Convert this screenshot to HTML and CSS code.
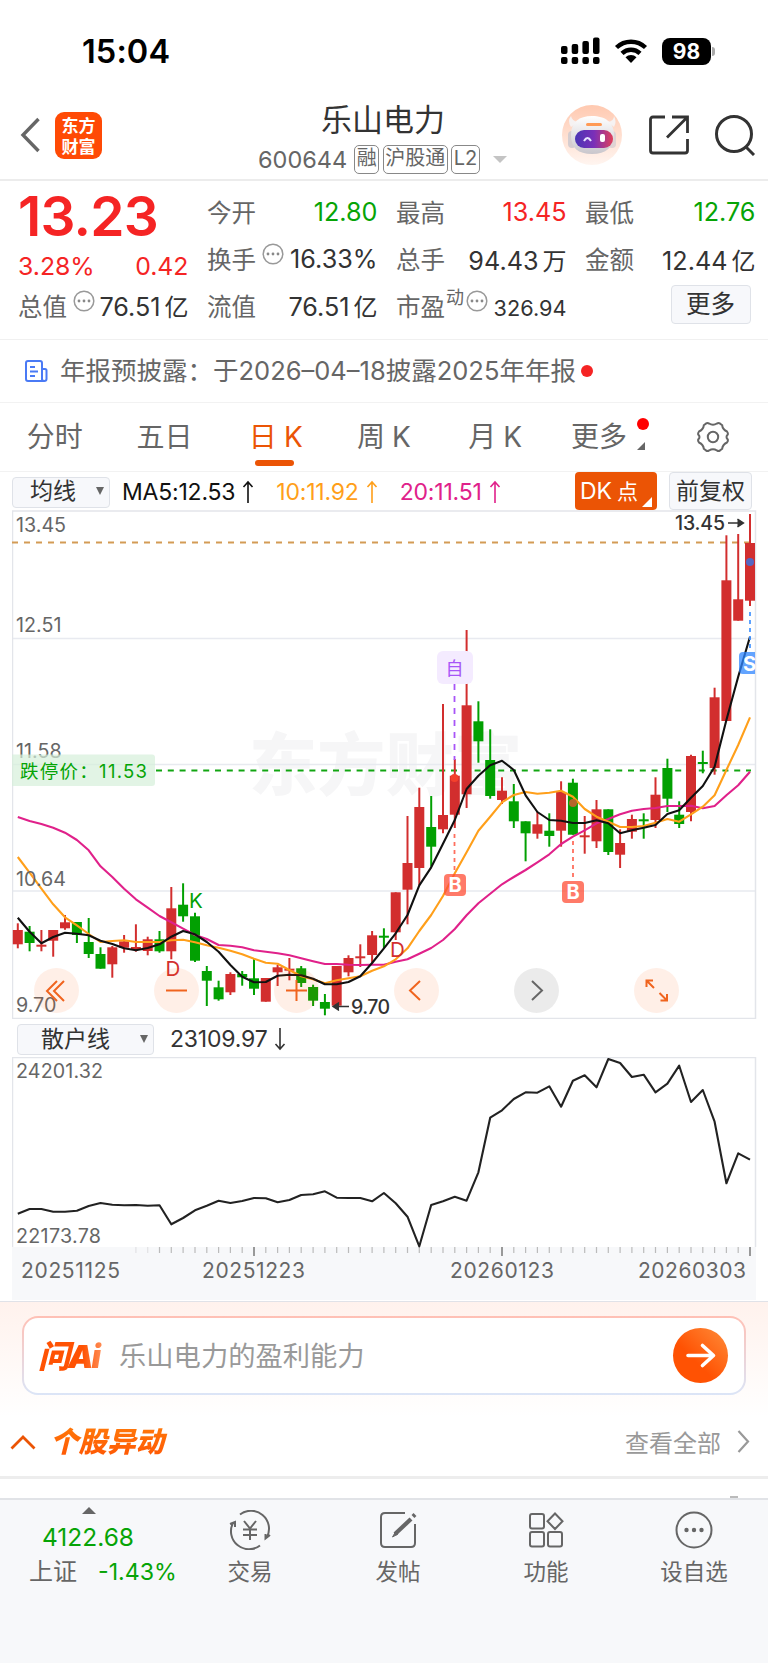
FILE: index.html
```html
<!DOCTYPE html>
<html lang="zh-CN">
<head>
    <meta charset="UTF-8">
    <meta name="viewport" content="width=device-width, initial-scale=1.0">
    <title>乐山电力 600644</title>
    <link rel="stylesheet" href="styles.css">
</head>
<body>
    <div class="status-bar">
        <span class="time">15:04</span>
        <div class="status-icons">
            <svg width="39" height="28" viewBox="0 0 39 28">
                <rect x="0" y="9" width="6.5" height="8" rx="2"/>
                <rect x="10.7" y="7" width="6.5" height="10" rx="2"/>
                <rect x="21.4" y="4" width="6.5" height="13" rx="2"/>
                <rect x="32" y="0.5" width="6.5" height="16.5" rx="2"/>
                <rect x="0" y="20" width="6.5" height="7" rx="2"/>
                <rect x="10.7" y="20" width="6.5" height="7" rx="2"/>
                <rect x="21.4" y="20" width="6.5" height="7" rx="2"/>
                <rect x="32" y="20" width="6.5" height="7" rx="2"/>
            </svg>
            <svg class="wifi" width="34" height="26" viewBox="0 0 34 26">
                <path d="M2.5 9.5a21 21 0 0 1 29 0M8 15.3a13 13 0 0 1 18 0" fill="none" stroke="#000" stroke-width="4.4"/>
                <path d="M11.5 19.2a8 8 0 0 1 11 0L17 25z"/>
            </svg>
            <span class="battery">98</span><i class="battery-cap"></i>
        </div>
    </div>

    <header class="header">
        <svg class="back" width="21" height="36" viewBox="0 0 21 36"><path d="M18.500 2L3 18l15.500 16" fill="none" stroke="#666" stroke-width="3.400"/></svg>
        <div class="logo"><span>东方</span><span>财富</span></div>
        <div class="title">
            <h1>乐山电力</h1>
            <div class="sub">
                <span class="code">600644</span>
                <span class="tag">融</span><span class="tag">沪股通</span><span class="tag">L2</span>
                <i class="caret"></i>
            </div>
        </div>
        <div class="actions">
            <svg width="60" height="60" viewBox="0 0 60 60">
                <defs>
                    <linearGradient id="halo" x1="0" y1="0" x2="0" y2="1"><stop offset="0" stop-color="#ffc9b0"/><stop offset="1" stop-color="#fff5f0"/></linearGradient>
                    <linearGradient id="visor"><stop offset="0" stop-color="#4a35b5"/><stop offset=".5" stop-color="#7a2fb8"/><stop offset="1" stop-color="#e0405a"/></linearGradient>
                    <linearGradient id="shell" x1="0" y1="0" x2="0" y2="1"><stop offset="0" stop-color="#fff"/><stop offset="1" stop-color="#c9c6cc"/></linearGradient>
                </defs>
                <circle cx="30" cy="30" r="30" fill="url(#halo)"/>
                <path d="M9 22q-4-6 0-11q1 5 7 6zM46 17q6-1 6-6q3 6 0 11z" fill="#f6f2f2"/>
                <rect x="6" y="26" width="8" height="17" rx="4" fill="#d5cdd0"/>
                <rect x="46" y="26" width="8" height="17" rx="4" fill="#e0d3d3"/>
                <path d="M9 30C9 17 17 11 30 11s22 6 22 19c0 12-8 19-22 19S9 43 9 30z" fill="url(#shell)"/>
                <rect x="24" y="18" width="16" height="3" rx="1.500" fill="#ff9a55"/>
                <rect x="13" y="25" width="38" height="18" rx="9" fill="url(#visor)"/>
                <path d="M22 36q3.500-6 7 0" fill="none" stroke="#e6e4ff" stroke-width="2"/>
                <rect x="38" y="29" width="5" height="8" rx="2" fill="#fff"/>
            </svg>
            <svg width="40" height="40" viewBox="0 0 40 40" fill="none" stroke="#333" stroke-width="2.800">
                <path d="M16 2H4Q1.500 2 1.500 4.500v31Q1.500 38 4 38h32q2.500 0 2.500-2.500V24M23 2h15.500v16M38 2.500L18 22.500"/>
            </svg>
            <svg width="41" height="42" viewBox="0 0 41 42" fill="none" stroke="#333" stroke-width="3"><circle cx="19" cy="20" r="17.500"/><path d="M31 33l8 8"/></svg>
        </div>
    </header>

    <section class="quote">
        <div class="main-price">
            <strong class="up">13.23</strong>
            <div class="cell up"><span>3.28%</span><span>0.42</span></div>
        </div>
        <div class="cell"><label>今开</label><span class="down">12.80</span></div>
        <div class="cell"><label>最高</label><span class="up">13.45</span></div>
        <div class="cell"><label>最低</label><span class="down">12.76</span></div>
        <div class="cell"><label>换手<svg class="dots"><use href="#dots"/></svg></label><span>16.33%</span></div>
        <div class="cell"><label>总手</label><span>94.43<b>万</b></span></div>
        <div class="cell"><label>金额</label><span>12.44<b>亿</b></span></div>
        <div class="cell"><label>总值<svg class="dots"><use href="#dots"/></svg></label><span>76.51<b>亿</b></span></div>
        <div class="cell"><label>流值</label><span>76.51<b>亿</b></span></div>
        <div class="cell"><label>市盈<sup>动</sup><svg class="dots tight"><use href="#dots"/></svg></label><span class="small">326.94</span></div>
        <div class="cell"><button class="more">更多</button></div>
    </section>

    <div class="notice">
        <svg width="23" height="23" viewBox="0 0 23 23" fill="none" stroke="#4a7af5" stroke-width="2">
            <path d="M17 21H3Q1 21 1 19V3Q1 1 3 1h12q2 0 2 2zM17 9h3q1.500 0 1.500 1.500V19q0 2-2.200 2T17 19M5 7h5M5 11.500h8M5 16h5"/>
        </svg>
        <span>年报预披露：<em>于2026–04–18披露2025年年报</em></span><i class="dot"></i>
    </div>

    <nav class="tabs">
        <span>分时</span>
        <span>五日</span>
        <span class="active">日<b>K</b></span>
        <span>周<b>K</b></span>
        <span class="month">月<b>K</b></span>
        <span class="tab-more">更多<i class="dot"></i><i class="corner"></i></span>
        <span>
            <svg width="32" height="32" viewBox="0 0 32 32" fill="none" stroke="#666" stroke-width="2">
                <path d="M12 2.500q4 2.600 8 0q1.500-.8 3 0l2.200 1.800q.4 4 4.800 6.200q1.200 1.500.8 3q-2.600 2.500 0 5q.4 1.500-.8 3q-4.400 2.200-4.800 6.200L23 29.500q-1.500.8-3 0q-4-2.600-8 0q-1.500.8-3 0l-2.200-1.800q-.4-4-4.800-6.200q-1.200-1.500-.8-3q2.600-2.500 0-5q-.4-1.500.8-3Q6.400 8.300 6.800 4.300L9 2.500q1.500-.8 3 0z"/>
                <circle cx="16" cy="16" r="5.200"/>
            </svg>
        </span>
    </nav>

    <div class="indicators">
        <button class="select">均线<i></i></button>
        <div class="ma">
            <span class="ma5">MA5:12.53<svg><use href="#arrow-up"/></svg></span>
            <span class="ma10">10:11.92<svg><use href="#arrow-up"/></svg></span>
            <span class="ma20">20:11.51<svg><use href="#arrow-up"/></svg></span>
        </div>
        <button class="dk">DK<b>点</b></button>
        <button class="fq">前复权</button>
    </div>

    <div class="kline">
        <svg id="kline" width="745" height="509" viewBox="12 510 745 509">
            <text class="watermark" x="249" y="790" textLength="273">东方财富</text>
            <path class="grid" d="M12 638.500H756M12 764.500H756M12 891H756"/>
            <rect class="frame" x="12.500" y="511" width="743" height="507.500"/>
            <path class="dash-price" d="M12 542.500H750"/>
            <path class="dash-limit" d="M156 770.500H751"/>
            <g id="candles"></g>
            <g id="lines"></g>
            <g class="scale">
                <text x="16" y="532">13.45</text>
                <text x="16" y="632">12.51</text>
                <text x="16" y="758">11.58</text>
                <text x="16" y="885.500">10.64</text>
                <text x="16" y="1011.500">9.70</text>
            </g>
            <path class="limit-bg" d="M12 754.500H152a3 3 0 0 1 3 3V783a3 3 0 0 1-3 3H12z"/>
            <text class="limit" x="20" y="778" textLength="127">跌停价：11.53</text>

            <text class="mark-d" x="165.500" y="975.500">D</text>
            <text class="mark-k" x="189" y="908">K</text>
            <text class="mark-d" x="390" y="957">D</text>

            <path class="dash-self" d="M454.500 684V760"/>
            <rect x="437" y="651" width="36" height="33" rx="6" fill="#f4ebff"/>
            <text class="self" x="454.500" y="674.500">自</text>
            <path class="dash-b" d="M454.500 834V871M573 841V878"/>
            <g fill="#ff4d35" fill-opacity=".75">
                <rect x="444" y="874" width="22" height="22" rx="4"/>
                <rect x="562" y="881" width="22" height="22" rx="4"/>
            </g>
            <text class="badge" x="455" y="892">B</text>
            <text class="badge" x="573" y="899">B</text>
            <circle cx="454.500" cy="778" r="4" fill="#f4402c"/>
            <circle cx="573" cy="803" r="4" fill="#b5652b"/>
            <circle cx="750" cy="562" r="4" fill="#5566c2"/>
            <path class="dash-s" d="M750 612V648"/>
            <path d="M755 652H743a4 4 0 0 0-4 4v14a4 4 0 0 0 4 4H755z" fill="#2f86ff" fill-opacity=".75"/>
            <text class="badge" x="749.500" y="671">S</text>

            <text class="extreme" x="675" y="530" textLength="50">13.45</text>
            <path class="arrow" d="M728 523H743M737.500 519l6 4-6 4"/>
            <text class="extreme" x="351" y="1013.500" textLength="39">9.70</text>
            <path class="arrow" d="M349 1006.500H333M339 1002.500l-6 4 6 4"/>
        </svg>
        <div class="controls">
            <button><svg viewBox="0 0 45 45"><path d="M23 13L13 23l10 10M30 13L20 23l10 10"/></svg></button>
            <button><svg viewBox="0 0 45 45"><path d="M12 22.500h21"/></svg></button>
            <button><svg viewBox="0 0 45 45"><path d="M12 22.500h21M22.500 12v21"/></svg></button>
            <button><svg viewBox="0 0 45 45"><path d="M26 13L16 22.500 26 32"/></svg></button>
            <button class="off"><svg viewBox="0 0 45 45"><path d="M18 13l10 9.500L18 32"/></svg></button>
            <button><svg viewBox="0 0 45 45"><path d="M12.500 19V12.500h6.500M13 13l7 7M33 26v6.500h-6.500M32.500 32L25.500 25"/></svg></button>
        </div>
    </div>

    <div class="indicators second">
        <button class="select wide">散户线<i></i></button>
        <span class="value">23109.97<svg><use href="#arrow-down"/></svg></span>
    </div>

    <div class="retail">
        <svg id="retail" width="745" height="243" viewBox="12 1057 745 243">
            <rect x="12" y="1247" width="744" height="53" fill="#f7f8fa"/>
            <path class="frame" d="M12.500 1247V1057.500H755.500V1247"/>
            <g id="ticks"></g>
            <g class="scale">
                <text x="16" y="1077.500" textLength="87">24201.32</text>
                <text x="16" y="1243" textLength="85">22173.78</text>
            </g>
            <g class="dates">
                <text x="21" y="1278" textLength="99">20251125</text>
                <text x="202" y="1278" textLength="103">20251223</text>
                <text x="450" y="1278" textLength="104">20260123</text>
                <text x="638" y="1278" textLength="108">20260303</text>
            </g>
            <g id="retail-line"></g>
        </svg>
    </div>

    <section class="ask">
        <div class="ask-box">
            <span class="ask-logo">问Ai</span>
            <span class="ask-text">乐山电力的盈利能力</span>
            <button class="go"><svg width="55" height="55" viewBox="0 0 55 55"><path d="M15 27.500h25M29.500 17.500l11 10-11 10"/></svg></button>
        </div>
    </section>

    <section class="moves">
        <svg width="26" height="16" viewBox="0 0 26 16"><path d="M1.500 14.500L13 3l11.500 11.500" fill="none" stroke="#eb5405" stroke-width="2.800"/></svg>
        <h2>个股异动</h2>
        <span class="all">查看全部</span>
        <svg width="13" height="23" viewBox="0 0 13 23"><path d="M1.500 1L11 11.500 1.500 22" fill="none" stroke="#999" stroke-width="2.200"/></svg>
    </section>
    <div class="next-card"><i></i></div>

    <footer class="bottom-bar">
        <div class="index">
            <i class="up-caret"></i>
            <span class="down">4122.68</span>
            <div><span>上证</span><span class="down pct">-1.43%</span></div>
        </div>
        <div class="item">
            <svg width="44" height="40" viewBox="0 0 44 40">
                <path d="M12 4.500A18 18 0 0 1 39 27M42 25l-4.500 3.500V24M32 35.500A18 18 0 0 1 5 13M2 14l5-2v5M16 11l6 7.500 6-7.500M15 19.500h14M15 25h14M22 18.500V30"/>
            </svg>
            <span>交易</span>
        </div>
        <div class="item">
            <svg width="40" height="40" viewBox="0 0 40 40">
                <path d="M27 3H7Q3 3 3 7v26q0 4 4 4h26q4 0 4-4V14"/>
                <path d="M33 9L17 24" stroke-width="4.200"/><path d="M18 21l-3.500 6 5.500-3z" fill="#666" stroke-width="1"/><path d="M35 6.500l2-2" stroke-width="4"/>
            </svg>
            <span>发帖</span>
        </div>
        <div class="item">
            <svg width="40" height="40" viewBox="0 0 40 40">
                <rect x="4" y="4" width="14" height="14.500" rx="2"/>
                <rect x="4" y="22" width="14" height="14.500" rx="2"/>
                <rect x="22" y="22" width="14" height="14.500" rx="2"/>
                <path d="M29 3.500l7.500 7.800L29 19l-7.500-7.700z"/>
            </svg>
            <span>功能</span>
        </div>
        <div class="item">
            <svg width="40" height="40" viewBox="0 0 40 40">
                <circle cx="20" cy="20" r="17.500"/>
                <g fill="#666" stroke="none"><circle cx="12.500" cy="20" r="2.200"/><circle cx="20" cy="20" r="2.200"/><circle cx="27.500" cy="20" r="2.200"/></g>
            </svg>
            <span>设自选</span>
        </div>
    </footer>

    <svg class="symbols">
        <symbol id="dots" viewBox="0 0 22 22">
            <circle cx="11" cy="11" r="9.800" fill="none" stroke="#999" stroke-width="1.500"/>
            <g fill="#888"><circle cx="6" cy="11" r="1.400"/><circle cx="11" cy="11" r="1.400"/><circle cx="16" cy="11" r="1.400"/></g>
        </symbol>
        <symbol id="arrow-up" viewBox="0 0 12 24"><path d="M6 23V2M1.500 7L6 2l4.500 5" fill="none" stroke="currentColor" stroke-width="1.600"/></symbol>
        <symbol id="arrow-down" viewBox="0 0 12 24"><path d="M6 1v21M1.500 17L6 22l4.500-5" fill="none" stroke="currentColor" stroke-width="1.600"/></symbol>
    </svg>
    <script src="chart.js"></script>
</body>
</html>
```
FILE: chart.js
```js
const START = 17.8;
const STEP = 11.81;
const x = i => +(START + i * STEP).toFixed(1);

// r/g, high, body top, body bottom, low
const candles = [
    ['r', 923.3, 930, 944.3, 948.3], ['g', 926, 931.7, 943, 951.3], ['r', 930, 944.7, 946, 951.3],
    ['r', 930, 930, 940.7, 956.7], ['r', 915, 922.3, 928.3, 929.7], ['g', 922, 922, 935, 943],
    ['g', 918, 942, 954, 958], ['g', 947.3, 954, 968.7, 968.7], ['r', 946, 947.3, 964.3, 977.7],
    ['r', 935, 941.3, 947.7, 952.7], ['r', 924.3, 947, 948.7, 951.7], ['r', 936.7, 939.3, 951, 955.3],
    ['g', 931, 939.3, 951.3, 952.7], ['r', 887, 908.3, 951.3, 959.3], ['g', 883.3, 904.7, 916.3, 921.7],
    ['g', 912.7, 916.3, 960.7, 962], ['g', 966, 971, 980.7, 1006], ['g', 980.7, 987.3, 999.3, 1000.7],
    ['r', 972.3, 974, 992.3, 995], ['g', 971, 974, 977.3, 985.7], ['g', 958.7, 978.3, 988.7, 995],
    ['r', 978, 978, 1001.7, 1001.7], ['r', 965, 967.3, 972.3, 986], ['r', 958, 968.7, 970, 980.3],
    ['g', 966, 968.3, 983, 987], ['g', 984.7, 987, 1000.7, 1006], ['g', 994, 1002, 1008.7, 1015.3],
    ['r', 966, 966, 1005.7, 1005.7], ['r', 955.3, 958, 972.3, 976.3], ['r', 944.3, 956.3, 957.7, 967],
    ['r', 931, 935.3, 955, 964.3], ['g', 928.3, 935.7, 937, 948], ['r', 892.3, 892.3, 932.3, 940],
    ['r', 816, 863, 889.7, 924.3], ['r', 787.7, 807, 868, 885.3], ['g', 796, 827, 846.7, 866.7],
    ['r', 704, 815, 829.3, 833.3], ['r', 759, 775.7, 814.7, 828], ['r', 630, 705.3, 794.3, 808],
    ['g', 701.3, 721.3, 741.3, 762.7], ['g', 729.3, 760, 796, 798.7], ['r', 777.3, 790.7, 800, 804],
    ['g', 784, 801.3, 821.3, 828], ['g', 821.3, 821.3, 833.3, 861.3], ['r', 812, 824.3, 833.7, 838.7],
    ['g', 813.3, 830.7, 836, 846.7], ['r', 781.3, 792, 830.7, 846.7], ['g', 778.7, 782.7, 834.7, 834.7],
    ['r', 816, 835.3, 836.7, 853.7], ['r', 800, 809.3, 841.3, 848], ['g', 809.3, 809.3, 852, 855],
    ['r', 829.3, 843, 854.7, 868], ['r', 814.7, 819, 831.7, 838.7], ['g', 813.3, 819.3, 820.7, 838.7],
    ['r', 777.3, 794.7, 820, 828], ['g', 758.7, 768, 798.7, 812], ['g', 801.3, 814.7, 824, 828],
    ['r', 754.7, 756, 812, 821.3], ['g', 750.7, 762, 763.3, 773.3], ['r', 687.7, 697.3, 768, 774.7],
    ['r', 535.3, 580.3, 721, 721], ['r', 534, 599.3, 620.7, 620.7], ['r', 514, 543, 600.7, 606]
];

const ma5 = [
    917.7, 931.7, 943.3, 937, 932.7, 933.7, 935.3, 940.7, 944, 948.3, 950.3, 948, 944.3, 936.7, 931, 934.3,
    942, 951.7, 965, 976.7, 982.3, 982, 975.7, 974.7, 975.3, 978.7, 984.3, 984.3, 982, 976.3, 963, 948.3,
    933.3, 915, 885.3, 867.3, 843.7, 820, 789, 775.7, 765.3, 760.7, 770, 795.3, 812, 820, 820.7, 823,
    823, 820.3, 823.3, 833.3, 830.3, 827.7, 825, 814, 810.3, 797.7, 786, 766.7, 720, 676.7, 636.7
];
const ma10 = [
    857, 872.7, 888.7, 904.3, 917.3, 925.3, 934, 942, 941, 940.3, 942, 942, 942, 940.3, 939.7, 942.3,
    945.3, 947.7, 950.7, 954.3, 958.7, 962.7, 963.7, 970, 976.3, 979.3, 983.3, 980.3, 978.3, 976.3, 970.7, 966.3,
    959.3, 948.3, 931, 915, 896, 873.3, 852.3, 830.7, 816.7, 802.3, 795, 792, 793.7, 792.7, 790.7, 796.7,
    809, 816.7, 821.7, 827, 827, 826, 822.7, 819, 821.7, 814.3, 806.7, 795.3, 770, 745, 717.3
];
const ma20 = [
    817, 821, 824, 827.7, 832.7, 840, 850.3, 866.3, 877, 888.7, 899.3, 907.7, 916, 922.3, 928.7, 935,
    939, 945, 945.7, 947.3, 950.3, 951.7, 953.3, 955.3, 958.3, 961.3, 964, 964, 964.7, 965, 964.7, 964.7,
    961.7, 959.3, 953.7, 948, 940, 929, 915.3, 903.3, 893.7, 884.3, 877, 870, 862.3, 854.3, 844, 836.7,
    830.3, 823.3, 819, 814.3, 810.7, 809, 808, 806, 806, 805.7, 808.3, 806, 795.3, 785.3, 771.7
];
const retail = [
    1213.7, 1209, 1209, 1211.7, 1211.7, 1210.7, 1206, 1203, 1204.7, 1205.3, 1205, 1205.7, 1205.3, 1224.3, 1218, 1210.3,
    1205.7, 1200.7, 1203, 1201, 1198, 1198.3, 1202.3, 1200, 1195, 1194.3, 1191.3, 1197.7, 1198, 1198, 1201.3, 1193,
    1203.3, 1216.7, 1246.3, 1205, 1201.3, 1196.7, 1200.7, 1172.3, 1117.7, 1110.3, 1099, 1092.3, 1092.7, 1086.3, 1106.7, 1080.7,
    1075.3, 1087.3, 1059, 1063, 1077, 1074.7, 1092.3, 1083.7, 1065.7, 1102, 1090, 1121.7, 1183.3, 1153.3, 1159.7
];

function line(values, color) {
    const points = values.map((y, i) => x(i) + ',' + y).join(' ');
    return `<polyline points="${points}" fill="none" stroke="${color}" stroke-width="2.1" stroke-linejoin="round"/>`;
}

document.getElementById('candles').innerHTML = candles.map(([c, high, top, bottom, low], i) => {
    const color = c === 'r' ? '#d22e2e' : '#02a002';
    const left = Math.max(x(i) - 5, 12.5);
    const height = Math.max(bottom - top, 2);
    return `<path d="M${x(i)} ${high}V${low}" stroke="${color}" stroke-width="2"/>` +
        `<rect x="${left}" y="${top}" width="${x(i) + 5 - left}" height="${height}" fill="${color}"/>`;
}).join('');

document.getElementById('lines').innerHTML = line(ma20, '#e0218a') + line(ma10, '#ff9f1a') + line(ma5, '#111');
document.getElementById('retail-line').innerHTML = line(retail, '#222');

let ticks = '';
for (let i = 10; i <= 62; i++) {
    const long = i === 20 || i === 41 || i === 62;
    const color = long ? '#999' : i < 12 ? '#e2e2e4' : '#bbb';
    ticks += `<path d="M${x(i)} 1247v${long ? 9 : 6}" stroke="${color}" stroke-width="${long ? 2 : 1.2}"/>`;
}
document.getElementById('ticks').innerHTML = ticks;
```
FILE: styles.css
```css
* {
    box-sizing: border-box;
}
body {
    margin: 0;
    width: 768px;
    height: 1663px;
    overflow: hidden;
    background: #fff;
    color: #333;
    font-family: Inter, "Noto Sans CJK SC", sans-serif;
    font-size: 24px;
}
svg {
    display: block;
    flex: none;
}
button {
    font-family: inherit;
    padding: 0;
    border: 1px solid #dfe2e8;
    border-radius: 4px;
    background: #f7f8fb;
    color: #333;
}
i {
    display: block;
    flex: none;
}
b, em, h1 {
    font-weight: normal;
    font-style: normal;
}
.symbols {
    display: none;
}
.up {
    color: #f52424;
}
.down {
    color: #06a406;
}
.dot {
    width: 12px;
    height: 12px;
    border-radius: 50%;
    background: #f52424;
}

/* status bar */
.status-bar {
    height: 90px;
    padding: 12px 53px 0 82px;
    display: flex;
    justify-content: space-between;
    align-items: center;
    color: #000;
}
.time {
    font-size: 32.5px;
    font-weight: 600;
    letter-spacing: 0.1px;
}
.status-icons {
    display: flex;
    align-items: center;
}
.wifi {
    margin: 0 14px 0 14px;
}
.battery {
    width: 49px;
    height: 27px;
    border-radius: 8px;
    background: #000;
    color: #fff;
    font-size: 21px;
    font-weight: 700;
    line-height: 27px;
    text-align: center;
}
.battery-cap {
    width: 3px;
    height: 9px;
    margin-left: 1px;
    border-radius: 0 3px 3px 0;
    background: #aaa;
}

/* header */
.header {
    height: 91px;
    padding: 1px 12px 0 20px;
    display: flex;
    align-items: center;
    border-bottom: 2px solid #ececec;
}
.logo {
    width: 47px;
    height: 47px;
    margin-left: 14px;
    padding: 2px 0;
    border-radius: 9px;
    background: #ff4a05;
    color: #fff;
    font-family: "Noto Sans CJK SC", sans-serif;
    font-size: 17px;
    font-weight: 700;
    line-height: 21px;
    text-align: center;
}
.logo span {
    display: block;
}
.title {
    width: 260px;
    margin: 0 auto 0 156px;
}
.title h1 {
    margin: 7px 0 0 -10px;
    font-size: 31px;
    line-height: 42px;
    text-align: center;
}
.sub {
    display: flex;
    align-items: center;
    height: 38px;
    color: #666;
}
.code {
    font-size: 23.5px;
    margin-right: 7px;
}
.tag {
    height: 29px;
    padding: 0 1.5px;
    margin-right: 3.5px;
    border: 1.5px solid #888;
    border-radius: 5px;
    font-size: 20px;
    line-height: 25px;
}
.caret {
    margin-left: 10px;
    border: 7px solid transparent;
    border-top-color: #c4c4c4;
    border-bottom: 0;
}
.actions {
    display: flex;
    align-items: center;
    gap: 26.5px;
}

/* quote */
.quote {
    display: grid;
    grid-template-columns: repeat(4, 170.5px);
    grid-template-rows: repeat(3, 46.8px);
    column-gap: 18.5px;
    height: 159px;
    padding: 8px 12px 0 18px;
    border-bottom: 1.5px solid #f0f0f0;
}
.main-price {
    grid-row: 1 / 3;
}
.main-price strong {
    display: block;
    font-size: 55px;
    font-weight: 600;
    line-height: 54px;
    letter-spacing: -0.8px;
}
.main-price .cell {
    height: 45px;
    font-size: 24.8px;
}
.cell {
    display: flex;
    align-items: center;
    justify-content: space-between;
    white-space: nowrap;
    font-size: 25.2px;
}
.cell label {
    display: flex;
    align-items: center;
    margin-top: -2px;
    color: #666;
    font-size: 24.5px;
}
.cell b {
    margin-left: 4px;
    font-size: 24px;
}
.cell:nth-child(n + 8) label {
    margin-top: 0;
}
.cell sup {
    font-size: 18px;
    line-height: 20px;
    margin-top: -15px;
    margin-left: 1px;
    vertical-align: baseline;
}
.cell .small {
    font-size: 21.7px;
    margin-top: 5px;
}
.dots {
    width: 22px;
    height: 22px;
    margin: -9px 0 0 6px;
}
.dots.tight {
    margin-left: 2px;
}
.more {
    width: 80px;
    height: 39px;
    margin: -3px 5px 0 auto;
    font-size: 24.5px;
    line-height: 35px;
}

/* notice */
.notice {
    height: 63px;
    padding-left: 25px;
    display: flex;
    align-items: center;
    border-bottom: 1.5px solid #f2f2f2;
    color: #666;
    font-size: 25.5px;
}
.notice span {
    margin: -5px 5px 0 12px;
    white-space: nowrap;
}

/* tabs */
.tabs {
    height: 69px;
    display: grid;
    grid-template-columns: repeat(7, 1fr);
    border-bottom: 1.5px solid #f2f2f2;
    color: #666;
    font-size: 28px;
    line-height: 66px;
}
.tabs > span {
    position: relative;
    display: flex;
    justify-content: center;
    align-items: center;
}
.tabs b {
    margin-left: 7px;
}
.tabs .active {
    padding-left: 3px;
    color: #eb5405;
}
.tabs .month {
    padding-left: 3px;
}
.tabs .active::after {
    content: "";
    position: absolute;
    left: 35.5px;
    bottom: 5px;
    width: 39px;
    height: 6px;
    border-radius: 3px;
    background: #eb5405;
}
.tabs .tab-more {
    padding-right: 9px;
}
.tab-more .dot {
    position: absolute;
    left: 88px;
    top: 15px;
    background: #f00;
}
.corner {
    position: absolute;
    left: 88px;
    top: 39px;
    border: 4px solid transparent;
    border-right-color: #666;
    border-bottom-color: #666;
}

/* indicator rows */
.indicators {
    height: 39px;
    padding: 0 16px 0 12px;
    display: flex;
    align-items: center;
}
.select {
    display: flex;
    align-items: center;
    justify-content: space-between;
    width: 98px;
    height: 31px;
    padding: 0 5px 2px 17px;
    margin-top: 1px;
    font-size: 23px;
    line-height: 28px;
}
.select i {
    border: 4.5px solid transparent;
    border-top: 8px solid #666;
    border-bottom: 0;
}
.select.wide {
    width: 137px;
    margin-left: 5px;
    padding-left: 23px;
}
.ma {
    display: flex;
    gap: 22px;
    margin-left: 12px;
    font-size: 23px;
}
.ma span, .value {
    display: flex;
    align-items: center;
    letter-spacing: -0.2px;
}
.ma svg, .value svg {
    width: 12px;
    height: 24px;
    margin-left: 7px;
}
.ma5 {
    color: #111;
}
.ma10 {
    color: #ff9f1a;
}
.ma20 {
    color: #e0218a;
}
.dk, .fq {
    height: 38px;
    font-size: 23px;
    line-height: 34px;
    margin-left: auto;
    margin-top: -1px;
}
.dk {
    position: relative;
    width: 82px;
    padding-left: 5px;
    border: 0;
    background: #eb5405;
    color: #fff;
    text-align: left;
}
.dk b {
    margin-left: 5px;
    font-size: 21px;
}
.dk::after {
    content: "";
    position: absolute;
    right: 5px;
    bottom: 3px;
    border: 5.5px solid transparent;
    border-right-color: #fff;
    border-bottom-color: #fff;
}
.fq {
    width: 83px;
    margin-left: 12px;
}
.second {
    height: 38px;
    padding-top: 2px;
}
.value {
    margin-left: 16px;
    font-size: 23px;
}

/* charts */
.kline {
    position: relative;
    height: 509px;
    margin: -1px 0 0 12px;
}
.retail {
    margin-left: 12px;
    height: 244px;
}
.frame {
    fill: none;
    stroke: #e3e5ea;
    stroke-width: 1.5;
}
.grid {
    stroke: #e8eaf0;
    stroke-width: 1.6;
}
.watermark {
    font: 800 68px "Noto Sans CJK SC", sans-serif;
    fill: #f6f6f7;
}
.scale {
    font-size: 19.7px;
    fill: #666;
}
.dates {
    font-size: 21px;
    fill: #666;
}
.dash-price {
    stroke: #d39b55;
    stroke-width: 1.8;
    stroke-dasharray: 6 6;
}
.dash-limit {
    stroke: #12a512;
    stroke-width: 1.8;
    stroke-dasharray: 6 5.8;
}
.dash-self {
    stroke: #a855f7;
    stroke-width: 1.8;
    stroke-dasharray: 6 6;
}
.dash-b {
    stroke: #ff6f5e;
    stroke-width: 1.8;
    stroke-dasharray: 4 4;
}
.dash-s {
    stroke: #4b98ff;
    stroke-width: 1.8;
    stroke-dasharray: 4 4;
}
.limit-bg {
    fill: #d6f0da;
    fill-opacity: 0.7;
}
.limit {
    font-size: 18.5px;
    fill: #06a406;
}
.mark-d, .mark-k {
    font-size: 20.5px;
    fill: #d22e2e;
}
.mark-k {
    fill: #02a002;
}
.self {
    font-size: 18px;
    fill: #a855f7;
    text-anchor: middle;
}
.badge {
    font-size: 20px;
    font-weight: 700;
    fill: #fff;
    text-anchor: middle;
}
.extreme {
    font-size: 19.5px;
    font-weight: 500;
    fill: #333;
}
.arrow {
    fill: #333;
    stroke: #333;
    stroke-width: 1.4;
}
.controls {
    position: absolute;
    left: 22px;
    right: 89px;
    bottom: 6.5px;
    display: flex;
    justify-content: space-between;
}
.controls button {
    width: 45px;
    height: 45px;
    border: 0;
    border-radius: 50%;
    background: rgba(255, 100, 20, 0.1);
}
.controls svg {
    fill: none;
    stroke: #f0641e;
    stroke-width: 2;
}
.controls .off {
    background: rgba(0, 0, 0, 0.08);
}
.controls .off svg {
    stroke: #666;
}

/* ask */
.ask {
    height: 116px;
    padding: 14px 22px 0;
    border-top: 1.5px solid #e0e2e8;
    background: linear-gradient(#fff2ed, #fff);
}
.ask-box {
    display: flex;
    align-items: center;
    height: 79px;
    padding: 0 16px 0 14px;
    border: 2px solid transparent;
    border-radius: 16px;
    background: linear-gradient(#fff, #fff) padding-box, linear-gradient(#ffc0b5, #dbe5f7) border-box;
}
.ask-logo {
    width: 64px;
    margin-top: -4px;
    font-size: 32px;
    font-weight: 900;
    font-style: italic;
    letter-spacing: -2px;
    white-space: nowrap;
    background: linear-gradient(90deg, #ff5203 70%, #ff8d55);
    -webkit-background-clip: text;
    color: transparent;
}
.ask-text {
    margin: -4px 0 0 17px;
    color: #999;
    font-size: 27.3px;
}
.go {
    width: 55px;
    height: 55px;
    margin-left: auto;
    border: 0;
    border-radius: 50%;
    background: linear-gradient(45deg, #ff5203 40%, #ff8d3a);
}
.go path {
    fill: none;
    stroke: #fff;
    stroke-width: 3.6;
    stroke-linecap: round;
    stroke-linejoin: round;
}

/* stock moves */
.moves {
    display: flex;
    align-items: center;
    height: 62px;
    padding: 0 18px 10px 10px;
    border-bottom: 3px solid #ededed;
}
.moves h2 {
    margin: 0 auto 0 14px;
    padding-right: 6px;
    font-size: 28.5px;
    font-weight: 900;
    font-style: italic;
    line-height: 40px;
    background: linear-gradient(#ff7d0a, #ff5203);
    -webkit-background-clip: text;
    color: transparent;
}
.all {
    margin-right: 16px;
    color: #999;
    font-size: 24px;
}
.next-card {
    height: 19px;
    padding: 17px 0 0 730px;
}
.next-card i {
    width: 8px;
    height: 2px;
    background: #bbb;
}

/* bottom bar */
.bottom-bar {
    display: flex;
    height: 166px;
    border-top: 2px solid #e1e3e7;
    background: #f7f8fa;
    color: #666;
}
.index {
    width: 176px;
    padding-top: 7px;
    white-space: nowrap;
}
.index > span {
    display: block;
    margin: 5px 0 0 42px;
    font-size: 24.5px;
    line-height: 36px;
}
.index div {
    display: flex;
    align-items: center;
    margin-left: 29px;
    line-height: 34px;
}
.pct {
    margin-left: 21px;
    font-size: 23.2px;
}
.up-caret {
    width: 14px;
    margin-left: 82px;
    border: 7px solid transparent;
    border-bottom-color: #666;
    border-top: 0;
}
.item {
    width: 148px;
    padding-top: 10px;
    display: flex;
    flex-direction: column;
    align-items: center;
    font-size: 22.5px;
    line-height: 34px;
}
.item svg {
    margin-bottom: 5px;
    fill: none;
    stroke: #666;
    stroke-width: 2;
}
```
